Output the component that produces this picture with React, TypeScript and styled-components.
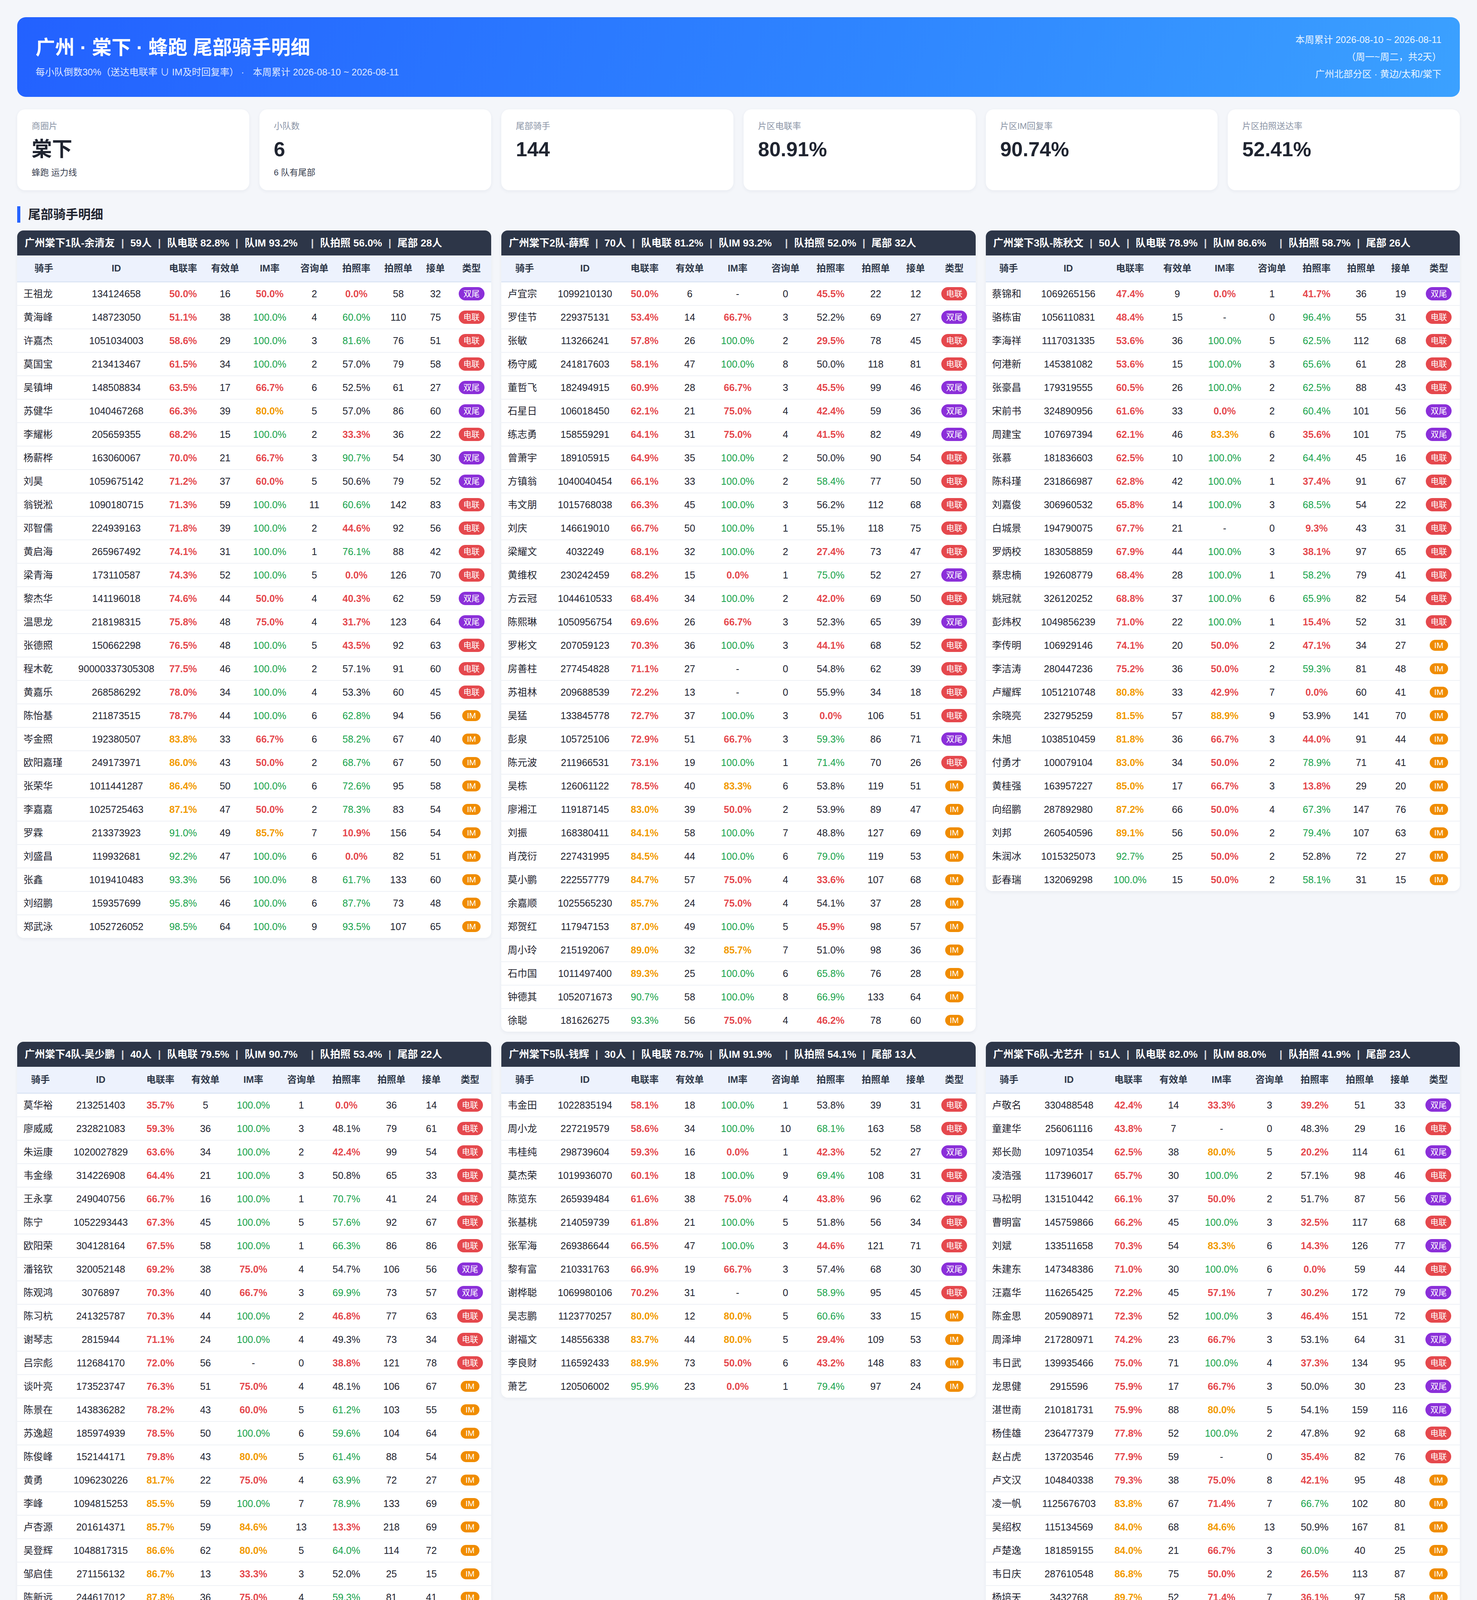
import styled, { createGlobalStyle } from "styled-components";

type Kind = "双尾" | "电联" | "IM";
type Tone = "bad" | "warn" | "good" | "plain";

interface Rider {
  name: string;
  id: string;
  el: string;
  eff: string;
  im: string;
  cons: string;
  photo: string;
  photoCnt: string;
  take: string;
  kind: Kind;
}

interface Team {
  title: string;
  people: number;
  el: string;
  im: string;
  photo: string;
  tail: number;
  rows: string;
}

const parse = (s: string): Rider[] =>
  s
    .trim()
    .split("\n")
    .map((line) => {
      const [name, id, el, eff, im, cons, photo, photoCnt, take, kind] = line
        .trim()
        .split(/\s+/);
      return { name, id, el, eff, im, cons, photo, photoCnt, take, kind: kind as Kind };
    });

const teams: Team[] = [
  {
    title: "广州棠下1队-余清友",
    people: 59,
    el: "82.8%",
    im: "93.2%",
    photo: "56.0%",
    tail: 28,
    rows: `
王祖龙 134124658 50.0% 16 50.0% 2 0.0% 58 32 双尾
黄海峰 148723050 51.1% 38 100.0% 4 60.0% 110 75 电联
许嘉杰 1051034003 58.6% 29 100.0% 3 81.6% 76 51 电联
莫国宝 213413467 61.5% 34 100.0% 2 57.0% 79 58 电联
吴镇坤 148508834 63.5% 17 66.7% 6 52.5% 61 27 双尾
苏健华 1040467268 66.3% 39 80.0% 5 57.0% 86 60 双尾
李耀彬 205659355 68.2% 15 100.0% 2 33.3% 36 22 电联
杨薪桦 163060067 70.0% 21 66.7% 3 90.7% 54 30 双尾
刘昊 1059675142 71.2% 37 60.0% 5 50.6% 79 52 双尾
翁锐淞 1090180715 71.3% 59 100.0% 11 60.6% 142 83 电联
邓智儒 224939163 71.8% 39 100.0% 2 44.6% 92 56 电联
黄启海 265967492 74.1% 31 100.0% 1 76.1% 88 42 电联
梁青海 173110587 74.3% 52 100.0% 5 0.0% 126 70 电联
黎杰华 141196018 74.6% 44 50.0% 4 40.3% 62 59 双尾
温思龙 218198315 75.8% 48 75.0% 4 31.7% 123 64 双尾
张德照 150662298 76.5% 48 100.0% 5 43.5% 92 63 电联
程木乾 90000337305308 77.5% 46 100.0% 2 57.1% 91 60 电联
黄嘉乐 268586292 78.0% 34 100.0% 4 53.3% 60 45 电联
陈怡基 211873515 78.7% 44 100.0% 6 62.8% 94 56 IM
岑金照 192380507 83.8% 33 66.7% 6 58.2% 67 40 IM
欧阳嘉瑾 249173971 86.0% 43 50.0% 2 68.7% 67 50 IM
张荣华 1011441287 86.4% 50 100.0% 6 72.6% 95 58 IM
李嘉嘉 1025725463 87.1% 47 50.0% 2 78.3% 83 54 IM
罗霖 213373923 91.0% 49 85.7% 7 10.9% 156 54 IM
刘盛昌 119932681 92.2% 47 100.0% 6 0.0% 82 51 IM
张鑫 1019410483 93.3% 56 100.0% 8 61.7% 133 60 IM
刘绍鹏 159357699 95.8% 46 100.0% 6 87.7% 73 48 IM
郑武泳 1052726052 98.5% 64 100.0% 9 93.5% 107 65 IM`,
  },
  {
    title: "广州棠下2队-薛辉",
    people: 70,
    el: "81.2%",
    im: "93.2%",
    photo: "52.0%",
    tail: 32,
    rows: `
卢宜宗 1099210130 50.0% 6 - 0 45.5% 22 12 电联
罗佳节 229375131 53.4% 14 66.7% 3 52.2% 69 27 双尾
张敏 113266241 57.8% 26 100.0% 2 29.5% 78 45 电联
杨守威 241817603 58.1% 47 100.0% 8 50.0% 118 81 电联
董哲飞 182494915 60.9% 28 66.7% 3 45.5% 99 46 双尾
石星日 106018450 62.1% 21 75.0% 4 42.4% 59 36 双尾
练志勇 158559291 64.1% 31 75.0% 4 41.5% 82 49 双尾
曾萧宇 189105915 64.9% 35 100.0% 2 50.0% 90 54 电联
方镇翁 1040040454 66.1% 33 100.0% 2 58.4% 77 50 电联
韦文朋 1015768038 66.3% 45 100.0% 3 56.2% 112 68 电联
刘庆 146619010 66.7% 50 100.0% 1 55.1% 118 75 电联
梁耀文 4032249 68.1% 32 100.0% 2 27.4% 73 47 电联
黄维权 230242459 68.2% 15 0.0% 1 75.0% 52 27 双尾
方云冠 1044610533 68.4% 34 100.0% 2 42.0% 69 50 电联
陈熙琳 1050956754 69.6% 26 66.7% 3 52.3% 65 39 双尾
罗彬文 207059123 70.3% 36 100.0% 3 44.1% 68 52 电联
房善柱 277454828 71.1% 27 - 0 54.8% 62 39 电联
苏祖林 209688539 72.2% 13 - 0 55.9% 34 18 电联
吴猛 133845778 72.7% 37 100.0% 3 0.0% 106 51 电联
彭泉 105725106 72.9% 51 66.7% 3 59.3% 86 71 双尾
陈元波 211966531 73.1% 19 100.0% 1 71.4% 70 26 电联
吴栋 126061122 78.5% 40 83.3% 6 53.8% 119 51 IM
廖湘江 119187145 83.0% 39 50.0% 2 53.9% 89 47 IM
刘振 168380411 84.1% 58 100.0% 7 48.8% 127 69 IM
肖茂衍 227431995 84.5% 44 100.0% 6 79.0% 119 53 IM
莫小鹏 222557779 84.7% 57 75.0% 4 33.6% 107 68 IM
余嘉顺 1025565230 85.7% 24 75.0% 4 54.1% 37 28 IM
郑贺红 117947153 87.0% 49 100.0% 5 45.9% 98 57 IM
周小玲 215192067 89.0% 32 85.7% 7 51.0% 98 36 IM
石巾国 1011497400 89.3% 25 100.0% 6 65.8% 76 28 IM
钟德其 1052071673 90.7% 58 100.0% 8 66.9% 133 64 IM
徐聪 181626275 93.3% 56 75.0% 4 46.2% 78 60 IM`,
  },
  {
    title: "广州棠下3队-陈秋文",
    people: 50,
    el: "78.9%",
    im: "86.6%",
    photo: "58.7%",
    tail: 26,
    rows: `
蔡锦和 1069265156 47.4% 9 0.0% 1 41.7% 36 19 双尾
骆栋宙 1056110831 48.4% 15 - 0 96.4% 55 31 电联
李海祥 1117031335 53.6% 36 100.0% 5 62.5% 112 68 电联
何港新 145381082 53.6% 15 100.0% 3 65.6% 61 28 电联
张豪昌 179319555 60.5% 26 100.0% 2 62.5% 88 43 电联
宋前书 324890956 61.6% 33 0.0% 2 60.4% 101 56 双尾
周建宝 107697394 62.1% 46 83.3% 6 35.6% 101 75 双尾
张慕 181836603 62.5% 10 100.0% 2 64.4% 45 16 电联
陈科瑾 231866987 62.8% 42 100.0% 1 37.4% 91 67 电联
刘嘉俊 306960532 65.8% 14 100.0% 3 68.5% 54 22 电联
白城景 194790075 67.7% 21 - 0 9.3% 43 31 电联
罗炳校 183058859 67.9% 44 100.0% 3 38.1% 97 65 电联
蔡忠楠 192608779 68.4% 28 100.0% 1 58.2% 79 41 电联
姚冠就 326120252 68.8% 37 100.0% 6 65.9% 82 54 电联
彭炜权 1049856239 71.0% 22 100.0% 1 15.4% 52 31 电联
李传明 106929146 74.1% 20 50.0% 2 47.1% 34 27 IM
李洁涛 280447236 75.2% 36 50.0% 2 59.3% 81 48 IM
卢耀辉 1051210748 80.8% 33 42.9% 7 0.0% 60 41 IM
余晓亮 232795259 81.5% 57 88.9% 9 53.9% 141 70 IM
朱旭 1038510459 81.8% 36 66.7% 3 44.0% 91 44 IM
付勇才 100079104 83.0% 34 50.0% 2 78.9% 71 41 IM
黄桂强 163957227 85.0% 17 66.7% 3 13.8% 29 20 IM
向绍鹏 287892980 87.2% 66 50.0% 4 67.3% 147 76 IM
刘邦 260540596 89.1% 56 50.0% 2 79.4% 107 63 IM
朱润冰 1015325073 92.7% 25 50.0% 2 52.8% 72 27 IM
彭春瑞 132069298 100.0% 15 50.0% 2 58.1% 31 15 IM`,
  },
  {
    title: "广州棠下4队-吴少鹏",
    people: 40,
    el: "79.5%",
    im: "90.7%",
    photo: "53.4%",
    tail: 22,
    rows: `
莫华裕 213251403 35.7% 5 100.0% 1 0.0% 36 14 电联
廖威威 232821083 59.3% 36 100.0% 3 48.1% 79 61 电联
朱运康 1020027829 63.6% 34 100.0% 2 42.4% 99 54 电联
韦金缘 314226908 64.4% 21 100.0% 3 50.8% 65 33 电联
王永享 249040756 66.7% 16 100.0% 1 70.7% 41 24 电联
陈宁 1052293443 67.3% 45 100.0% 5 57.6% 92 67 电联
欧阳荣 304128164 67.5% 58 100.0% 1 66.3% 86 86 电联
潘铭钦 320052148 69.2% 38 75.0% 4 54.7% 106 56 双尾
陈观鸿 3076897 70.3% 40 66.7% 3 69.9% 73 57 双尾
陈习杭 241325787 70.3% 44 100.0% 2 46.8% 77 63 电联
谢琴志 2815944 71.1% 24 100.0% 4 49.3% 73 34 电联
吕宗彪 112684170 72.0% 56 - 0 38.8% 121 78 电联
谈叶亮 173523747 76.3% 51 75.0% 4 48.1% 106 67 IM
陈景在 143836282 78.2% 43 60.0% 5 61.2% 103 55 IM
苏逸超 185974939 78.5% 50 100.0% 6 59.6% 104 64 IM
陈俊峰 152144171 79.8% 43 80.0% 5 61.4% 88 54 IM
黄勇 1096230226 81.7% 22 75.0% 4 63.9% 72 27 IM
李峰 1094815253 85.5% 59 100.0% 7 78.9% 133 69 IM
卢杏源 201614371 85.7% 59 84.6% 13 13.3% 218 69 IM
吴登辉 1048817315 86.6% 62 80.0% 5 64.0% 114 72 IM
邹启佳 271156132 86.7% 13 33.3% 3 52.0% 25 15 IM
陈新远 244617012 87.8% 36 75.0% 4 59.3% 81 41 IM`,
  },
  {
    title: "广州棠下5队-钱辉",
    people: 30,
    el: "78.7%",
    im: "91.9%",
    photo: "54.1%",
    tail: 13,
    rows: `
韦金田 1022835194 58.1% 18 100.0% 1 53.8% 39 31 电联
周小龙 227219579 58.6% 34 100.0% 10 68.1% 163 58 电联
韦桂纯 298739604 59.3% 16 0.0% 1 42.3% 52 27 双尾
莫杰荣 1019936070 60.1% 18 100.0% 9 69.4% 108 31 电联
陈览东 265939484 61.6% 38 75.0% 4 43.8% 96 62 双尾
张基桃 214059739 61.8% 21 100.0% 5 51.8% 56 34 电联
张军海 269386644 66.5% 47 100.0% 3 44.6% 121 71 电联
黎有富 210331763 66.9% 19 66.7% 3 57.4% 68 30 双尾
谢桦聪 1069980106 70.2% 31 - 0 58.9% 95 45 电联
吴志鹏 1123770257 80.0% 12 80.0% 5 60.6% 33 15 IM
谢福文 148556338 83.7% 44 80.0% 5 29.4% 109 53 IM
李良财 116592433 88.9% 73 50.0% 6 43.2% 148 83 IM
萧艺 120506002 95.9% 23 0.0% 1 79.4% 97 24 IM`,
  },
  {
    title: "广州棠下6队-尤艺升",
    people: 51,
    el: "82.0%",
    im: "88.0%",
    photo: "41.9%",
    tail: 23,
    rows: `
卢敬名 330488548 42.4% 14 33.3% 3 39.2% 51 33 双尾
童建华 256061116 43.8% 7 - 0 48.3% 29 16 电联
郑长勋 109710354 62.5% 38 80.0% 5 20.2% 114 61 双尾
凌浩强 117396017 65.7% 30 100.0% 2 57.1% 98 46 电联
马松明 131510442 66.1% 37 50.0% 2 51.7% 87 56 双尾
曹明富 145759866 66.2% 45 100.0% 3 32.5% 117 68 电联
刘斌 133511658 70.3% 54 83.3% 6 14.3% 126 77 双尾
朱建东 147348386 71.0% 30 100.0% 6 0.0% 59 44 电联
汪嘉华 116265425 72.2% 45 57.1% 7 30.2% 172 79 双尾
陈金思 205908971 72.3% 52 100.0% 3 46.4% 151 72 电联
周泽坤 217280971 74.2% 23 66.7% 3 53.1% 64 31 双尾
韦日武 139935466 75.0% 71 100.0% 4 37.3% 134 95 电联
龙思健 2915596 75.9% 17 66.7% 3 50.0% 30 23 双尾
湛世南 210181731 75.9% 88 80.0% 5 54.1% 159 116 双尾
杨佳雄 236477379 77.8% 52 100.0% 2 47.8% 92 68 电联
赵占虎 137203546 77.9% 59 - 0 35.4% 82 76 电联
卢文汉 104840338 79.3% 38 75.0% 8 42.1% 95 48 IM
凌一帆 1125676703 83.8% 67 71.4% 7 66.7% 102 80 IM
吴绍权 115134569 84.0% 68 84.6% 13 50.9% 167 81 IM
卢楚逸 181859155 84.0% 21 66.7% 3 60.0% 40 25 IM
韦日庆 287610548 86.8% 75 50.0% 2 26.5% 113 87 IM
杨培天 3432768 89.7% 52 71.4% 7 36.1% 97 58 IM
李哲崇 310087428 90.7% 68 33.3% 3 45.0% 109 75 IM`,
  },
];

const stats = [
  { label: "商圈片", value: "棠下", sub: "蜂跑 运力线" },
  { label: "小队数", value: "6", sub: "6 队有尾部" },
  { label: "尾部骑手", value: "144" },
  { label: "片区电联率", value: "80.91%" },
  { label: "片区IM回复率", value: "90.74%" },
  { label: "片区拍照送达率", value: "52.41%" },
];

const columns = ["骑手", "ID", "电联率", "有效单", "IM率", "咨询单", "拍照率", "拍照单", "接单", "类型"];

const targetTone = (v: string): Tone => {
  if (v === "-") return "plain";
  const n = parseFloat(v);
  if (n >= 90) return "good";
  if (n >= 80) return "warn";
  return "bad";
};
const photoTone = (v: string): Tone => {
  const n = parseFloat(v);
  if (n >= 57.5) return "good";
  if (n < 47.5) return "bad";
  return "plain";
};

const App = () => {
  return (
    <Page>
      <GlobalStyle />
      <Hero>
        <div>
          <HeroTitle>广州 · 棠下 · 蜂跑 尾部骑手明细</HeroTitle>
          <HeroSub>
            每小队倒数30%（送达电联率 ∪ IM及时回复率）<Dot>·</Dot>本周累计 2026-08-10 ~ 2026-08-11
          </HeroSub>
        </div>
        <HeroMeta>
          <div>本周累计 2026-08-10 ~ 2026-08-11</div>
          <div>（周一~周二，共2天）</div>
          <div>广州北部分区 · 黄边/太和/棠下</div>
        </HeroMeta>
      </Hero>

      <StatGrid>
        {stats.map((s) => (
          <StatCard key={s.label}>
            <StatLabel>{s.label}</StatLabel>
            <StatValue>{s.value}</StatValue>
            {s.sub && <StatSub>{s.sub}</StatSub>}
          </StatCard>
        ))}
      </StatGrid>

      <SectionTitle>尾部骑手明细</SectionTitle>

      <TeamGrid>
        {teams.map((t) => (
          <TeamCard key={t.title}>
            <TeamBar>
              {t.title}
              <Sep>|</Sep>
              {t.people}人<Sep>|</Sep>队电联 {t.el}
              <Sep>|</Sep>队IM {t.im}
              <Sep $wide>|</Sep>队拍照 {t.photo}
              <Sep>|</Sep>尾部 {t.tail}人
            </TeamBar>
            <Table>
              <thead>
                <tr>
                  {columns.map((c) => (
                    <Th key={c}>{c}</Th>
                  ))}
                </tr>
              </thead>
              <tbody>
                {parse(t.rows).map((r) => (
                  <Row key={r.id}>
                    <Td>{r.name}</Td>
                    <Td>{r.id}</Td>
                    <Td>
                      <Rate $tone={targetTone(r.el)}>{r.el}</Rate>
                    </Td>
                    <Td>{r.eff}</Td>
                    <Td>
                      <Rate $tone={targetTone(r.im)}>{r.im}</Rate>
                    </Td>
                    <Td>{r.cons}</Td>
                    <Td>
                      <Rate $tone={photoTone(r.photo)}>{r.photo}</Rate>
                    </Td>
                    <Td>{r.photoCnt}</Td>
                    <Td>{r.take}</Td>
                    <Td>
                      <Badge $kind={r.kind}>{r.kind}</Badge>
                    </Td>
                  </Row>
                ))}
              </tbody>
            </Table>
          </TeamCard>
        ))}
      </TeamGrid>

      <Footer>
        数据来源：FBI 报表 1971299 服务升级4项达成情况；拍照送达率取自 FBI 报表 1918475
        华南战区不满意运营报表 · 尾部口径：每小队倒数30%（送达电联率 ∪ IM及时回复率）
        <Dot>·</Dot>累计口径：窗口内 2 天分子分母累加后重算比率（非日均），尾部小队与尾部骑手均按累计数据排名 · 由
        QoderWork 自动生成
      </Footer>
    </Page>
  );
};

const GlobalStyle = createGlobalStyle`
  html, body {
    margin: 0;
    background: #f4f6fa;
  }
  body {
    font-family: "Liberation Sans", "Noto Sans CJK SC", sans-serif;
    color: #1f2430;
  }
`;

const Page = styled.div`
  padding: 44px 44px 40px;
`;

const Hero = styled.header`
  display: flex;
  justify-content: space-between;
  align-items: center;
  padding: 36px 47px;
  border-radius: 22px;
  background: linear-gradient(110deg, #2361ff 0%, #2f86ff 60%, #3ba1ff 100%);
  color: #fff;
`;
const HeroTitle = styled.h1`
  margin: 0;
  font-size: 50px;
  line-height: 65px;
  font-weight: 700;
`;
const HeroSub = styled.div`
  margin-top: 12px;
  font-size: 24px;
  line-height: 35px;
  color: rgba(255, 255, 255, 0.86);
`;
const Dot = styled.span`
  margin: 0 22px 0 18px;
`;
const HeroMeta = styled.div`
  text-align: right;
  font-size: 24px;
  line-height: 44px;
  color: rgba(255, 255, 255, 0.93);
`;

const StatGrid = styled.div`
  margin-top: 32px;
  display: grid;
  grid-template-columns: repeat(6, 1fr);
  gap: 26px;
`;
const StatCard = styled.div`
  background: #fff;
  border-radius: 20px;
  padding: 27px 37px 29px;
  box-shadow: 0 3px 10px rgba(30, 50, 90, 0.06);
`;
const StatLabel = styled.div`
  font-size: 22px;
  line-height: 32px;
  color: #8a94a6;
`;
const StatValue = styled.div`
  margin-top: 12px;
  font-size: 52px;
  line-height: 62px;
  font-weight: 700;
  color: #1f2430;
`;
const StatSub = styled.div`
  margin-top: 13px;
  font-size: 22px;
  line-height: 32px;
  color: #3a4150;
`;

const SectionTitle = styled.h2`
  margin: 41px 0 20px;
  padding-left: 20px;
  border-left: 8px solid #2563ff;
  font-size: 32px;
  line-height: 42px;
  font-weight: 700;
  color: #1f2430;
`;

const TeamGrid = styled.div`
  display: grid;
  grid-template-columns: repeat(3, 1fr);
  gap: 26px;
  align-items: start;
`;
const TeamCard = styled.section`
  background: #fff;
  border-radius: 16px;
  overflow: hidden;
  box-shadow: 0 3px 10px rgba(30, 50, 90, 0.06);
`;
const TeamBar = styled.div`
  background: #2d3648;
  color: #fff;
  padding: 0 19px;
  font-size: 26px;
  line-height: 64px;
  font-weight: 700;
  white-space: nowrap;
`;
const Sep = styled.span<{ $wide?: boolean }>`
  margin: 0 16px 0 ${(p) => (p.$wide ? "34px" : "16px")};
  opacity: 0.8;
`;
const Table = styled.table`
  width: 100%;
  border-collapse: collapse;
`;
const Th = styled.th`
  background: #edf2fd;
  padding: 15px 16px;
  font-size: 24px;
  line-height: 36px;
  font-weight: 700;
  color: #2d3748;
  text-align: center;
  white-space: nowrap;
  border-bottom: 3px solid #dde6f5;
`;
const Td = styled.td`
  height: 36px;
  padding: 11px 16px;
  font-size: 25px;
  line-height: 36px;
  text-align: center;
  white-space: nowrap;
  border-bottom: 2px solid #eef1f6;

  &:first-child {
    text-align: left;
  }
`;
const Row = styled.tr`
  &:last-child ${Td} {
    border-bottom: none;
  }
`;
const toneColor: Record<Tone, string> = {
  bad: "#e5484d",
  warn: "#f29a00",
  good: "#17a34a",
  plain: "#1f2430",
};
const Rate = styled.span<{ $tone: Tone }>`
  color: ${(p) => toneColor[p.$tone]};
  font-weight: ${(p) => (p.$tone === "bad" || p.$tone === "warn" ? 700 : 400)};
`;
const badgeColor: Record<Kind, string> = {
  双尾: "#8b2fd9",
  电联: "#e5484d",
  IM: "#f08c00",
};
// top-aligned with a margin so the pill never stretches the 36px line box
const Badge = styled.span<{ $kind: Kind }>`
  display: inline-block;
  vertical-align: top;
  margin-top: ${(p) => (p.$kind === "IM" ? "4px" : "1px")};
  padding: ${(p) => (p.$kind === "IM" ? "2px 12px" : "5px 12px")};
  border-radius: 999px;
  font-size: 21px;
  line-height: 24px;
  color: #fff;
  background: ${(p) => badgeColor[p.$kind]};
`;

const Footer = styled.footer`
  margin-top: 31px;
  text-align: center;
  font-size: 22px;
  line-height: 32px;
  color: #94a3b8;
`;

export default App;
